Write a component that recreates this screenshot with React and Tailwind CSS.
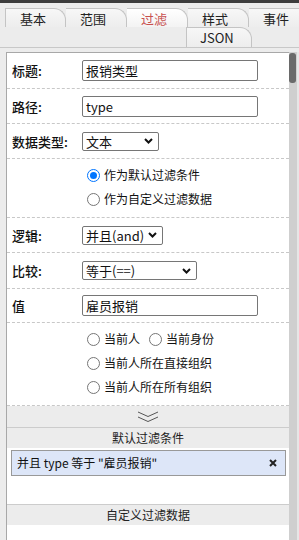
import React from "react";

function Tab({ label, active, first }) {
  return (
    <div
      className={
        "h-full w-[61px] shrink-0 border-t border-r border-[#c4c4c4] rounded-tr-[12px] pl-[14px] flex items-center text-[13px] leading-none " +
        (first ? "border-l " : "") +
        (active
          ? "bg-gradient-to-b from-[#ffffff] to-[#f3f3f3] text-[#c8504e]"
          : "bg-gradient-to-b from-[#f7f7f7] to-[#ededed] text-[#222]")
      }
    >
      {label}
    </div>
  );
}

function Chevron() {
  return (
    <svg width="9" height="6" viewBox="0 0 9 6" className="shrink-0">
      <path d="M1 1 L4.5 4.5 L8 1" fill="none" stroke="#111" strokeWidth="2" />
    </svg>
  );
}

function Radio({ checked }) {
  return checked ? (
    <div className="w-[13px] h-[13px] rounded-full border-[1.5px] border-[#0075ff] bg-white flex items-center justify-center shrink-0">
      <div className="w-[7px] h-[7px] rounded-full bg-[#0075ff]" />
    </div>
  ) : (
    <div className="w-[13px] h-[13px] rounded-full border border-[#767676] bg-white shrink-0" />
  );
}

function Row({ h, label, children }) {
  return (
    <div className={"flex items-center border-b border-dashed border-[#c8c8c8] shrink-0 " + h}>
      <div className="w-[75px] pl-[5px] text-[13px] font-medium text-[#111] leading-none">{label}</div>
      {children}
    </div>
  );
}

export default function App() {
  return (
    <div className="w-[299px] h-[540px] overflow-hidden bg-[#ececec] flex flex-col font-['Noto_Sans_CJK_SC',sans-serif] text-[#111]">
      <div className="h-[3px] bg-[#3d3d3d] shrink-0" />
      <div className="h-[45px] pt-[5px] border-b border-[#c8c8c8] shrink-0">
        <div className="flex h-[19px] pl-[5px]">
          <Tab label="基本" first />
          <Tab label="范围" />
          <Tab label="过滤" active />
          <Tab label="样式" />
          <Tab label="事件" />
        </div>
        <div className="flex h-[20px] pl-[186px]">
          <div className="h-full w-[66px] border-t border-r border-l border-[#c4c4c4] rounded-tr-[12px] pl-[13px] flex items-center text-[13px] leading-none bg-gradient-to-b from-[#f7f7f7] to-[#ededed] text-[#222]">
            JSON
          </div>
        </div>
      </div>
      <div className="h-[4px] shrink-0" />
      <div className="flex flex-1 min-h-0">
        <div className="ml-[6px] flex-1 border-l border-t border-[#a8a8a8] bg-white flex flex-col min-w-0">
          <Row h="h-[36px]" label="标题:">
            <div className="w-[176px] h-[21px] border border-[#767676] rounded-[2px] pl-[3px] flex items-center text-[13px] leading-none">报销类型</div>
          </Row>
          <Row h="h-[35px]" label="路径:">
            <div className="w-[176px] h-[21px] border border-[#767676] rounded-[2px] pl-[3px] flex items-center text-[13px] leading-none">type</div>
          </Row>
          <Row h="h-[35px]" label="数据类型:">
            <div className="w-[77px] h-[19px] border border-[#767676] rounded-[2px] pl-[3px] pr-[5px] flex items-center justify-between text-[13px] leading-none">
              <span>文本</span>
              <Chevron />
            </div>
          </Row>
          <div className="h-[59px] border-b border-dashed border-[#c8c8c8] pt-[4px] pl-[80px] shrink-0 text-[12px] leading-none">
            <div className="h-[24px] flex items-center gap-[4px]">
              <Radio checked />
              <span>作为默认过滤条件</span>
            </div>
            <div className="h-[24px] flex items-center gap-[4px]">
              <Radio />
              <span>作为自定义过滤数据</span>
            </div>
          </div>
          <Row h="h-[35px]" label="逻辑:">
            <div className="w-[81px] h-[19px] border border-[#767676] rounded-[2px] pl-[3px] pr-[5px] flex items-center justify-between text-[13px] leading-none">
              <span>并且(and)</span>
              <Chevron />
            </div>
          </Row>
          <Row h="h-[36px]" label="比较:">
            <div className="w-[115px] h-[19px] border border-[#767676] rounded-[2px] pl-[3px] pr-[5px] flex items-center justify-between text-[13px] leading-none">
              <span>等于(==)</span>
              <Chevron />
            </div>
          </Row>
          <Row h="h-[34px]" label="值">
            <div className="w-[176px] h-[21px] border border-[#767676] rounded-[2px] pl-[3px] flex items-center text-[13px] leading-none">雇员报销</div>
          </Row>
          <div className="h-[83px] border-b border-dashed border-[#c8c8c8] pt-[4px] pl-[80px] shrink-0 text-[12px] leading-none">
            <div className="h-[24px] flex items-center gap-[4px]">
              <Radio />
              <span className="mr-[5px]">当前人</span>
              <Radio />
              <span>当前身份</span>
            </div>
            <div className="h-[24px] flex items-center gap-[4px]">
              <Radio />
              <span>当前人所在直接组织</span>
            </div>
            <div className="h-[24px] flex items-center gap-[4px]">
              <Radio />
              <span>当前人所在所有组织</span>
            </div>
          </div>
          <div className="h-[22px] bg-[#ececec] border-b border-[#cccccc] flex items-center justify-center shrink-0">
            <svg width="22" height="12" viewBox="0 0 22 12">
              <path d="M1 1 L11 5.5 L21 1" fill="none" stroke="#555" strokeWidth="1" />
              <path d="M1 6 L11 10.5 L21 6" fill="none" stroke="#555" strokeWidth="1" />
            </svg>
          </div>
          <div className="h-[20px] bg-[#ececec] flex items-center justify-center text-[12px] leading-none text-[#222] shrink-0">默认过滤条件</div>
          <div className="h-[56px] pt-[2px] pl-[4px] pr-[3px] shrink-0">
            <div className="h-[26px] bg-[#dde6f8] border border-[#999] flex items-center justify-between pl-[5px] pr-[8px] text-[12px] leading-none text-[#111]">
              <span>并且 type 等于 "雇员报销"</span>
              <svg width="8" height="8" viewBox="0 0 8 8">
                <path d="M1 1 L7 7 M7 1 L1 7" stroke="#222" strokeWidth="2" />
              </svg>
            </div>
          </div>
          <div className="h-[21px] bg-[#ececec] border-t border-[#cccccc] flex items-center justify-center text-[12px] leading-none text-[#222] shrink-0">自定义过滤数据</div>
          <div className="flex-1 bg-white" />
        </div>
        <div className="w-[8px] bg-[#cfcfcf] pt-px shrink-0">
          <div className="h-[30px] w-[7px] rounded-[3px] bg-[#6a6a6a]" />
        </div>
        <div className="w-[2px] bg-[#e6e6e6] shrink-0" />
      </div>
    </div>
  );
}
